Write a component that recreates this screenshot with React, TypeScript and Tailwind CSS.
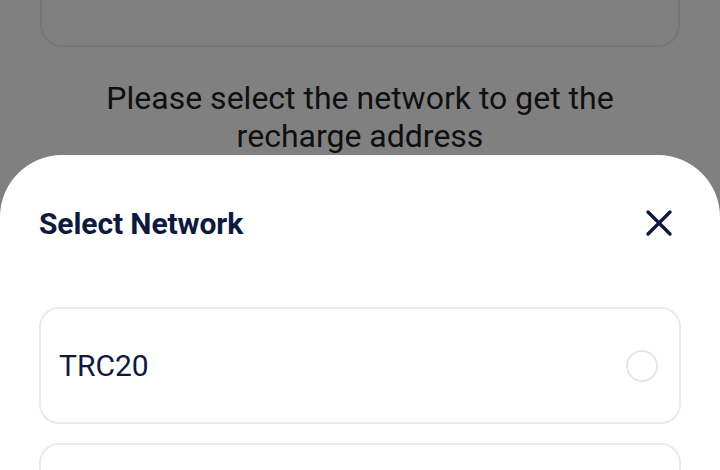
import React from "react";

export default function App() {
  return (
    <div
      className="w-[720px] h-[470px] overflow-hidden bg-[#808080] flex flex-col"
      style={{ fontFamily: "Roboto, 'Liberation Sans', sans-serif" }}
    >
      <div className="mx-[40px] h-[47px] shrink-0 border-x-2 border-b-2 border-[#777777] rounded-b-[22px]" />
      <div className="mt-[32px] text-center text-[32px] leading-[38px] text-[#0f0f0f] px-[90px]">
        Please select the network to get the recharge address
      </div>
      <div className="mt-[0px] flex-1 bg-white rounded-t-[62px] flex flex-col px-[39px]">
        <div className="flex items-center justify-between h-[136px]">
          <div className="text-[30px] font-bold text-[#0e1a3d] tracking-[-0.1px]">Select Network</div>
          <svg width="30" height="30" viewBox="0 0 30 30" className="mr-[7px]">
            <path d="M4 4 L26 26 M26 4 L4 26" stroke="#0e1a3d" strokeWidth="3.4" strokeLinecap="round" />
          </svg>
        </div>
        <div className="mt-[16px] h-[117px] shrink-0 border-2 border-[#ebebeb] rounded-[20px] flex items-center justify-between pl-[18px] pr-[21px]">
          <span className="text-[30px] text-[#0e1a3d]">TRC20</span>
          <span className="w-[32px] h-[32px] rounded-full border-2 border-[#e6e6e6]" />
        </div>
        <div className="mt-[19px] h-[117px] shrink-0 border-2 border-[#ebebeb] rounded-[20px]" />
      </div>
    </div>
  );
}
